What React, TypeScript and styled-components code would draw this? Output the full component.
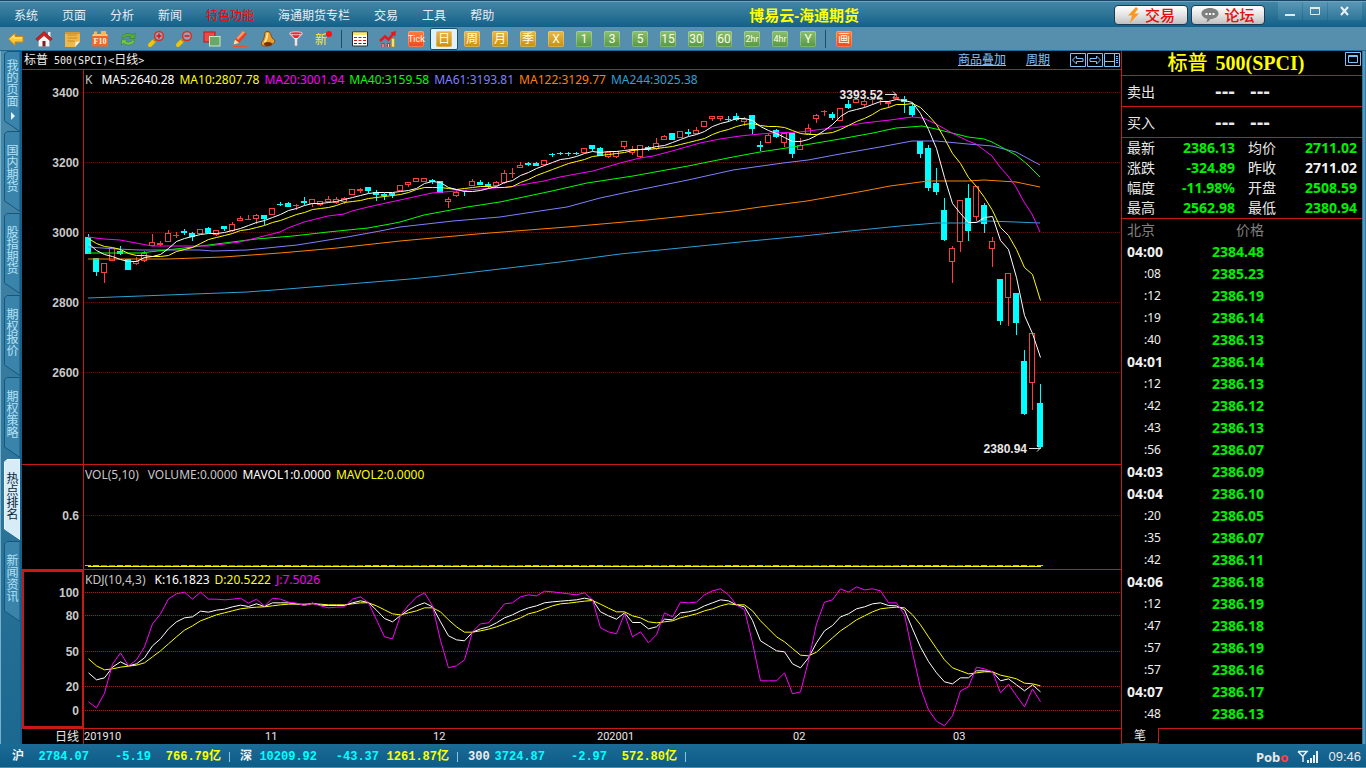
import React from "react";
import styled, { createGlobalStyle, css } from "styled-components";

const GlobalStyle = createGlobalStyle`
  *, *::before, *::after { box-sizing: border-box; }
  html, body { margin: 0; padding: 0; background: #000; }
  body { font-family: "Noto Sans", "Noto Sans CJK SC", sans-serif; font-size: 12px; color: #e8e8e8; }
  button { font: inherit; color: inherit; background: none; border: 0; padding: 0; cursor: pointer; }
  a { color: inherit; }
`;

const RED = "#c81818";
const CYAN = "#00ffff";
const CANDLE_RED = "#ff3c3c";
const GREEN = "#00f000";

/* ---------- data ---------- */

type Candle = [kind: "u" | "d", high: number, top: number, bottom: number, low: number];

const candles: Candle[] = [
  ["d", 234, 237, 254, 254], ["d", 258, 258, 272, 276], ["u", 263, 263, 273, 283], ["u", 248, 248, 261, 261],
  ["d", 246, 251, 254, 255], ["d", 259, 259, 270, 270], ["u", 257, 261, 264, 265], ["u", 251, 253, 261, 262],
  ["u", 234, 242, 246, 246], ["u", 241, 243, 245, 246], ["u", 230, 233, 242, 242], ["u", 232, 235, 236, 238],
  ["d", 229, 231, 233, 235], ["d", 232, 233, 237, 241], ["u", 229, 229, 234, 234], ["d", 227, 228, 233, 233],
  ["u", 230, 230, 235, 236], ["d", 226, 226, 229, 231], ["u", 222, 224, 231, 232], ["u", 216, 218, 221, 221],
  ["u", 215, 219, 220, 220], ["u", 214, 215, 219, 224], ["d", 215, 215, 219, 225], ["u", 208, 208, 215, 215],
  ["d", 202, 204, 205, 206], ["d", 202, 203, 207, 207], ["u", 204, 205, 206, 210], ["d", 197, 201, 203, 205],
  ["u", 199, 199, 204, 207], ["u", 201, 201, 205, 206], ["u", 196, 199, 202, 203], ["u", 197, 199, 203, 204],
  ["u", 197, 198, 202, 204], ["u", 189, 189, 195, 195], ["u", 188, 189, 191, 193], ["d", 187, 187, 191, 193],
  ["d", 190, 192, 195, 201], ["d", 193, 194, 196, 200], ["d", 193, 193, 195, 198], ["u", 185, 185, 191, 191],
  ["u", 182, 182, 185, 187], ["u", 178, 178, 182, 182], ["u", 178, 178, 182, 182], ["d", 179, 180, 182, 184],
  ["d", 181, 181, 193, 193], ["u", 197, 199, 202, 208], ["u", 190, 192, 196, 197], ["d", 190, 190, 191, 196],
  ["u", 179, 181, 186, 186], ["d", 180, 182, 185, 185], ["d", 182, 184, 187, 189], ["u", 181, 182, 186, 186],
  ["u", 170, 173, 183, 184], ["u", 168, 173, 174, 178], ["u", 162, 165, 168, 168], ["d", 162, 163, 165, 166],
  ["d", 162, 163, 166, 166], ["u", 160, 160, 165, 166], ["d", 153, 154, 155, 157], ["d", 152, 153, 154, 155],
  ["d", 152, 153, 154, 156], ["d", 152, 153, 154, 155], ["u", 148, 148, 153, 153], ["d", 145, 145, 149, 151],
  ["d", 147, 148, 156, 156], ["u", 152, 152, 157, 158], ["u", 151, 151, 157, 158], ["u", 141, 141, 147, 149],
  ["u", 146, 150, 153, 155], ["u", 145, 145, 157, 158], ["d", 146, 147, 149, 151], ["u", 138, 143, 149, 150],
  ["u", 135, 136, 140, 140], ["d", 133, 133, 140, 140], ["u", 131, 131, 138, 138], ["d", 129, 132, 134, 136],
  ["u", 127, 130, 134, 134], ["u", 121, 121, 127, 127], ["u", 116, 116, 119, 121], ["u", 116, 116, 119, 121],
  ["d", 116, 119, 120, 122], ["d", 113, 116, 120, 121], ["u", 117, 119, 122, 126], ["d", 115, 115, 129, 134],
  ["d", 141, 145, 147, 151], ["u", 133, 135, 143, 143], ["d", 129, 130, 137, 138], ["u", 133, 133, 143, 147],
  ["d", 133, 133, 154, 158], ["u", 138, 145, 150, 150], ["u", 124, 128, 134, 134], ["u", 114, 115, 119, 123],
  ["u", 110, 111, 112, 116], ["d", 112, 114, 118, 120], ["u", 108, 108, 121, 121], ["d", 100, 104, 108, 109],
  ["u", 99, 99, 103, 103], ["u", 99, 101, 105, 107], ["u", 99, 99, 100, 105], ["u", 99, 99, 100, 105],
  ["u", 101, 102, 104, 108], ["u", 94, 97, 99, 99], ["d", 96, 99, 102, 113], ["d", 103, 106, 115, 117],
  ["d", 141, 141, 154, 158], ["d", 145, 148, 188, 191], ["d", 168, 183, 192, 195], ["d", 198, 210, 240, 241],
  ["u", 246, 248, 262, 283], ["u", 200, 200, 242, 252], ["d", 184, 198, 231, 241], ["u", 186, 186, 217, 221],
  ["d", 203, 205, 224, 233], ["u", 237, 241, 249, 267], ["d", 279, 279, 321, 325], ["u", 273, 273, 298, 326],
  ["d", 293, 293, 323, 335], ["d", 350, 361, 414, 415], ["u", 333, 333, 383, 410], ["d", 384, 403, 447, 449],
];

const ma5 = [
  243, 250, 254, 256, 259, 261, 261, 257, 256, 254, 248, 241, 238, 236, 234, 233, 233, 232, 230, 228, 225, 222, 220,
  217, 214, 210, 208, 205, 203, 203, 202, 201, 199, 197, 195, 193, 192, 192, 192, 191, 190, 188, 183, 181, 182, 187,
  189, 191, 191, 190, 188, 186, 182, 180, 175, 172, 168, 165, 162, 159, 158, 156, 153, 151, 152, 151, 151, 150, 149,
  149, 148, 146, 145, 142, 139, 136, 134, 131, 126, 123, 121, 118, 118, 120, 126, 130, 133, 137, 141, 141, 139, 135,
  130, 124, 116, 111, 109, 107, 104, 101, 101, 99, 100, 102, 113, 129, 148, 177, 203, 213, 222, 222, 217, 216, 240,
  249, 277, 315, 333, 357,
];

const ma10 = [
  238, 243, 246, 247, 249, 253, 255, 255, 256, 256, 255, 251, 249, 247, 243, 239, 237, 235, 233, 230, 229, 227, 225,
  222, 220, 217, 214, 212, 209, 208, 207, 205, 202, 201, 200, 198, 197, 196, 195, 194, 192, 189, 187, 187, 187, 188,
  189, 188, 187, 186, 186, 187, 187, 186, 182, 179, 175, 172, 169, 166, 163, 161, 159, 156, 155, 154, 153, 152, 150,
  149, 149, 148, 147, 146, 144, 142, 140, 138, 134, 131, 129, 126, 124, 123, 125, 126, 126, 127, 130, 133, 134, 134,
  133, 132, 129, 125, 121, 118, 114, 109, 107, 104, 104, 103, 107, 115, 124, 138, 153, 163, 177, 186, 197, 210, 227,
  235, 249, 267, 274, 300,
];

const longAverages = [
  {
    color: "#ff00ff",
    points:
      "88,237 104,239 120,240 136,243 152,246 208,246 224,244 240,242 256,238 280,232 288,228 304,222 328,216 344,214 352,211 368,207 400,200 432,193 480,189 510,187 532,183 544,181 560,177 576,174 593,171 620,163 640,158 653,156 672,151 700,143 720,139 740,136 760,134 773,133 800,132 840,127 864,123 890,120 912,117 923,118 936,124 952,133 968,141 976,144 992,156 1000,167 1008,176 1016,187 1024,202 1032,214 1040,232",
  },
  {
    color: "#00ff00",
    points:
      "88,253 140,253 193,247 256,239 293,236 328,232 368,228 390,224 400,222 424,215 467,207 500,202 552,191 587,183 633,176 688,166 733,157 760,152 793,147 840,139 873,133 896,128 910,127 922,126 936,129 952,133 968,137 984,139 992,142 1016,155 1027,164 1040,177",
  },
  {
    color: "#8080ff",
    points:
      "88,247 117,249 140,250 200,250 213,251 247,250 297,245 347,237 380,231 400,227 453,221 500,217 533,212 567,207 600,198 633,191 688,180 733,170 783,163 808,160 840,154 880,147 912,141 936,141 968,144 992,146 1016,152 1040,165",
  },
  {
    color: "#ff8000",
    points:
      "88,259 168,259 223,257 280,253 337,248 400,241 477,234 567,227 647,220 733,211 760,207 807,201 864,191 890,186 928,181 968,181 984,180 1016,182 1040,187",
  },
  {
    color: "#30a0d8",
    points:
      "88,298 167,295 247,292 287,289 410,279 440,276 500,269 560,262 620,254 680,248 740,242 803,236 850,231 900,226 937,223 968,223 987,221 1016,222 1040,223",
  },
];

/* Oscillator samples, kept in thirds of a pixel below the pane's top edge. */
const kLine = [
  307, 328, 322, 290, 274, 286, 280, 262, 226, 205, 175, 154, 142, 139, 122, 125, 119, 116, 109, 104, 108, 100, 108,
  97, 97, 97, 100, 104, 98, 104, 105, 105, 105, 97, 91, 96, 119, 144, 154, 135, 118, 106, 97, 109, 154, 196, 208, 211,
  185, 175, 169, 157, 142, 133, 121, 112, 106, 97, 94, 92, 90, 88, 83, 88, 124, 136, 146, 127, 156, 156, 175, 169, 146,
  148, 127, 124, 118, 106, 97, 88, 91, 103, 109, 150, 211, 226, 241, 244, 280, 292, 262, 217, 181, 165, 139, 130, 115,
  109, 100, 97, 105, 106, 118, 175, 230, 273, 307, 334, 340, 322, 322, 301, 301, 304, 331, 325, 343, 361, 343, 364,
];

const dLine = [
  265, 286, 298, 295, 290, 287, 284, 277, 259, 241, 220, 199, 179, 166, 151, 142, 133, 127, 121, 115, 112, 110, 109,
  106, 103, 101, 101, 101, 100, 101, 103, 103, 103, 100, 97, 97, 106, 118, 130, 133, 127, 121, 112, 112, 124, 148, 169,
  185, 185, 181, 176, 169, 160, 151, 142, 130, 124, 115, 106, 100, 98, 95, 92, 90, 101, 113, 124, 124, 136, 142, 154,
  157, 154, 151, 142, 136, 130, 121, 115, 106, 100, 103, 103, 121, 151, 175, 199, 214, 234, 254, 256, 245, 223, 202,
  181, 165, 148, 136, 124, 115, 112, 110, 112, 133, 163, 199, 234, 268, 292, 301, 310, 307, 304, 304, 314, 319, 325,
  338, 340, 346,
];

const jLine = [
  394, 412, 368, 281, 247, 286, 268, 229, 160, 130, 85, 70, 65, 86, 65, 86, 86, 88, 86, 83, 98, 86, 107, 83, 86, 95,
  98, 105, 98, 106, 112, 110, 109, 86, 79, 97, 148, 199, 205, 135, 104, 80, 67, 106, 210, 292, 286, 268, 184, 160, 157,
  130, 100, 97, 79, 73, 76, 62, 64, 67, 70, 73, 67, 88, 172, 184, 190, 130, 199, 184, 217, 193, 127, 139, 95, 97, 95,
  73, 61, 55, 73, 103, 118, 217, 331, 331, 331, 307, 370, 364, 271, 160, 95, 88, 55, 65, 49, 58, 55, 61, 97, 97, 133,
  247, 352, 418, 452, 466, 436, 361, 349, 290, 295, 304, 367, 341, 376, 409, 355, 394,
];

const FIRST_X = 66;
const STEP = 8;
const sampleX = (i: number) => FIRST_X + STEP * i;

const quotes = [
  ["最新", "2386.13", "均价", "2711.02", GREEN],
  ["涨跌", "-324.89", "昨收", "2711.02", "#f0f0f0"],
  ["幅度", "-11.98%", "开盘", "2508.59", GREEN],
  ["最高", "2562.98", "最低", "2380.94", GREEN],
];

const ticks: [string, string][] = [
  ["04:00", "2384.48"], [":08", "2385.23"], [":12", "2386.19"], [":19", "2386.14"], [":40", "2386.13"],
  ["04:01", "2386.14"], [":12", "2386.13"], [":42", "2386.12"], [":43", "2386.13"], [":56", "2386.07"],
  ["04:03", "2386.09"], ["04:04", "2386.10"], [":20", "2386.05"], [":35", "2386.07"], [":42", "2386.11"],
  ["04:06", "2386.18"], [":12", "2386.19"], [":47", "2386.18"], [":57", "2386.19"], [":57", "2386.16"],
  ["04:07", "2386.17"], [":48", "2386.13"],
];

const indices = [
  ["沪", "2784.07", "-5.19", "766.79亿"],
  ["深", "10209.92", "-43.37", "1261.87亿"],
  ["300", "3724.87", "-2.97", "572.80亿"],
];

const menus = ["系统", "页面", "分析", "新闻", "特色功能", "海通期货专栏", "交易", "工具", "帮助"];
const railTabs = ["我的页面", "国内期货", "股指期货", "期权报价", "期权策略", "热点排名", "新闻资讯"];

/* ---------- frame ---------- */

const Frame = styled.div`
  min-height: 100vh;
  display: flex;
  flex-direction: column;
  border-top: 1px solid #1b4462;
  background: #2a7099;
`;

const MenuBar = styled.header`
  display: flex;
  align-items: center;
  height: 26px;
  padding-left: 2px;
  border-top: 1px solid #6aa5c4;
  background: linear-gradient(#4286a6, #2f7698 45%, #12608a);
`;

const MenuButton = styled.button<{ $hot?: boolean }>`
  height: 24px;
  padding: 0 12px;
  line-height: 26px;
  color: ${(p) => (p.$hot ? "#ff0000" : "#e4eef4")};
`;

const AppTitle = styled.h1`
  flex: 1;
  margin: 0;
  padding-right: 12px;
  text-align: center;
  font-size: 15px;
  line-height: 24px;
  font-weight: 700;
  color: #ffff00;
`;

const PillButton = styled.button`
  display: flex;
  align-items: center;
  justify-content: center;
  gap: 5px;
  width: 74px;
  height: 20px;
  margin-right: 3px;
  border: 1px solid #1c3a50;
  border-radius: 4px;
  background: linear-gradient(#ffffff, #e4e4e4 50%, #c0c0c0);
  color: #e01010;
  font-size: 15px;
  line-height: 18px;
  font-weight: 500;
`;

const WindowControls = styled.div`
  display: flex;
  align-self: flex-start;
  gap: 1px;
  margin: 0 4px 0 10px;
`;

const WindowButton = styled.button<{ $wide?: boolean }>`
  width: ${(p) => (p.$wide ? 34 : 24)}px;
  height: 18px;
  display: flex;
  align-items: center;
  justify-content: center;
  background: linear-gradient(#5a97b5, #2f7699);
`;

const ToolBar = styled.nav`
  display: flex;
  align-items: center;
  height: 24px;
  padding-left: 2px;
  border-bottom: 1px solid #1c6a94;
  background: #568fad;
`;

const ToolButton = styled.button<{ $active?: boolean }>`
  width: 28px;
  height: 22px;
  display: flex;
  align-items: center;
  justify-content: center;
  ${(p) =>
    p.$active &&
    css`
      background: #dff2fc;
      border: 1px solid #14506e;
      border-radius: 2px;
    `}
`;

const ToolDivider = styled.span`
  width: 8px;
  height: 18px;
  background: linear-gradient(#1d4d66, #1d4d66) 3px 0 / 1px 100% no-repeat;
`;

const tones = {
  gold: "linear-gradient(#e8b848, #c89010)",
  green: "linear-gradient(#8cc070, #559840)",
  red: "linear-gradient(#ff8040, #f04818)",
};

const Badge = styled.span<{ $tone: keyof typeof tones; $small?: boolean }>`
  width: 16px;
  height: 16px;
  border-radius: 2px;
  background: ${(p) => tones[p.$tone]};
  box-shadow: inset 0 0 0 1px rgba(255, 255, 255, 0.25);
  color: #fffbe8;
  font-family: Roboto, "Noto Sans CJK SC", sans-serif;
  font-size: ${(p) => (p.$small ? 9 : 12)}px;
  line-height: 16px;
  text-align: center;
`;

const Workspace = styled.main`
  flex: 1;
  display: grid;
  grid-template-columns: 22px minmax(0, 1fr) 241px;
  padding-right: 4px;
  background: linear-gradient(90deg, #1c6a94, #6ba6c4 50%, #1c6a94) right / 4px 100% no-repeat;
`;

/* ---------- left rail ---------- */

const Rail = styled.nav`
  display: flex;
  flex-direction: column;
  gap: 1px;
  padding-left: 3px;
  border-left: 1px solid #78b0cc;
  border-right: 2px solid #14608a;
  background: linear-gradient(#4d8bab, #1c6890);
`;

const RailTab = styled.button<{ $active?: boolean }>`
  position: relative;
  width: 16px;
  height: 81px;
  display: flex;
  flex-direction: column;
  align-items: center;
  padding: 14px 0 0 1px;
  color: ${(p) => (p.$active ? "#06283c" : "#b4e2f6")};

  &:first-child { padding-top: 9px; height: 79px; }
`;

const RailShape = styled.svg`
  position: absolute;
  inset: 0;
`;

const RailLabel = styled.span`
  position: relative;
  width: 12px;
  line-height: 12px;
  word-break: break-all;
`;

const RailArrow = styled.svg`
  position: relative;
  margin-top: 4px;
`;

/* ---------- chart ---------- */

const ChartPanel = styled.section`
  display: flex;
  flex-direction: column;
  background: #000;
`;

const ChartHeader = styled.div`
  display: flex;
  align-items: center;
  height: 19px;
  padding: 0 1px 0 2px;
  border-bottom: 1px solid ${RED};
`;

const ChartTitle = styled.h2`
  flex: 1;
  margin: 0;
  font-family: "DejaVu Sans Mono", "Noto Sans CJK SC", monospace;
  font-size: 10px;
  line-height: 18px;
  font-weight: 400;
  color: #f0f0f0;
`;

const TitleHan = styled.span`
  font-size: 12px;
`;

const HeaderLink = styled.a`
  margin-right: 20px;
  line-height: 16px;
  color: #80c0ff;
`;

const HeaderIcons = styled.div`
  display: flex;
  gap: 1px;
  color: #80c0ff;
`;

const IconButton = styled.button`
  display: flex;
  color: #80c0ff;
`;

const Pane = styled.div<{ $height: number }>`
  position: relative;
  flex: ${(p) => p.$height} 0 ${(p) => p.$height}px;
  border-bottom: 1px solid ${RED};
`;

const Plot = styled.svg`
  position: absolute;
  inset: 0;
  width: 100%;
  height: 100%;
  font-family: "Liberation Sans", sans-serif;
  font-size: 12px;
`;

const Legend = styled.div`
  position: absolute;
  left: 63px;
  top: 1px;
  display: flex;
  gap: 5px;
  line-height: 17px;
  white-space: nowrap;
`;

const LegendItem = styled.span<{ $color: string }>`
  color: ${(p) => p.$color};

  &:first-child { margin-right: 4px; }
`;

const DateAxis = styled.svg`
  display: block;
  width: 100%;
  height: 15px;
  font-family: Roboto, "Noto Sans CJK SC", sans-serif;
  font-size: 11px;
`;

/* ---------- quote panel ---------- */

const QuotePanel = styled.aside`
  display: flex;
  flex-direction: column;
  border-left: 1px solid ${RED};
  background: #000;
  font-size: 14px;
`;

const QuoteHeader = styled.div`
  position: relative;
  height: 25px;
  border-bottom: 1px solid ${RED};
`;

const QuoteTitle = styled.h2`
  margin: 0;
  padding-right: 12px;
  text-align: center;
  font-family: "Liberation Serif", "Noto Sans CJK SC", serif;
  font-size: 20px;
  line-height: 24px;
  font-weight: 500;
  color: #ffff00;
`;

const QuoteLatin = styled.span`
  margin-left: 3px;
  font-weight: 700;
`;

const QuoteCorner = styled.div`
  position: absolute;
  top: 1px;
  right: 1px;
`;

const BookRow = styled.div`
  display: flex;
  align-items: center;
  height: 31px;
  padding-left: 5px;
  border-bottom: 1px solid ${RED};
`;

const BookLabel = styled.span`
  width: 88px;
`;

const BookValue = styled.span`
  width: 35px;
  font-family: "Liberation Sans", sans-serif;
  font-size: 20px;
  line-height: 24px;
  font-weight: 700;
`;

const QuoteTable = styled.table`
  width: 100%;
  table-layout: fixed;
  border-collapse: collapse;
  border-bottom: 1px solid ${RED};
`;

const QuoteLabel = styled.th<{ $second?: boolean }>`
  width: ${(p) => (p.$second ? 50 : 43)}px;
  height: 20px;
  padding: 0 0 0 ${(p) => (p.$second ? 13 : 5)}px;
  font-weight: 400;
  line-height: 20px;
  text-align: left;
`;

const QuoteValue = styled.td<{ $color: string; $last?: boolean }>`
  width: ${(p) => (p.$last ? "auto" : "70px")};
  padding: 0 ${(p) => (p.$last ? 5 : 0)}px 0 0;
  font-weight: 700;
  line-height: 20px;
  text-align: right;
  color: ${(p) => p.$color};
`;

const TickTable = styled.table`
  width: 142px;
  table-layout: fixed;
  border-collapse: collapse;
`;

const TickHead = styled.th<{ $right?: boolean }>`
  height: 22px;
  padding: 0 0 0 ${(p) => (p.$right ? 0 : 5)}px;
  font-weight: 400;
  line-height: 22px;
  text-align: ${(p) => (p.$right ? "right" : "left")};
  color: #808080;
`;

const TickTime = styled.td<{ $minute: boolean }>`
  height: 22px;
  padding: 0 0 0 ${(p) => (p.$minute ? 5 : 22)}px;
  font-size: ${(p) => (p.$minute ? 14 : 12)}px;
  font-weight: ${(p) => (p.$minute ? 700 : 400)};
  line-height: 22px;
  color: #f0f0f0;
`;

const TickPrice = styled.td`
  padding: 0;
  font-weight: 700;
  line-height: 22px;
  text-align: right;
  color: ${GREEN};
`;

const PanelTabs = styled.div`
  display: flex;
  height: 16px;
  margin-top: auto;

  &::after { content: ""; flex: 1; border-top: 1px solid ${RED}; }
`;

const PanelTab = styled.button`
  width: 37px;
  border-right: 1px solid ${RED};
  border-bottom: 1px solid ${RED};
  border-radius: 0 0 2px 2px;
  font-size: 12px;
  line-height: 15px;
`;

/* ---------- status bar ---------- */

const StatusBar = styled.footer`
  display: flex;
  align-items: center;
  height: 24px;
  padding: 2px 5px 0 12px;
  border-bottom: 1px solid #4f8fb0;
  background: linear-gradient(#1a6b95, #0e5c88);
  font-family: "Liberation Mono", "Noto Sans CJK SC", monospace;
  font-weight: 700;
  line-height: 22px;
`;

const IndexGroup = styled.div`
  display: grid;
  grid-template-columns: 19px 58px 62px 70px 9px;
  margin-right: 10px;
  white-space: nowrap;

  &::after { content: ""; height: 10px; align-self: center; border-right: 1px solid #8cc4e0; }
`;

const IndexCell = styled.span<{ $color?: string }>`
  color: ${(p) => p.$color ?? "#f0f0f0"};
  text-align: ${(p) => (p.$color ? "right" : "left")};
`;

const Brand = styled.span`
  margin-left: auto;
  font-family: "Noto Sans", sans-serif;
  font-size: 13px;
`;

const BrandDot = styled.span`
  color: #ff4040;
`;

const Signal = styled.svg`
  margin: 0 9px;
`;

const Clock = styled.time`
  font-family: "Liberation Sans", sans-serif;
  font-size: 13px;
  font-weight: 400;
`;

/* ---------- icons ---------- */

const Icon = ({ children }: { children: React.ReactNode }) => (
  <svg width="18" height="18" viewBox="0 0 18 18" aria-hidden="true">
    {children}
  </svg>
);

const Magnifier = ({ plus }: { plus?: boolean }) => (
  <Icon>
    <path d="M3 15 6.5 11.500" stroke="#f4c400" strokeWidth="4" strokeLinecap="round" />
    <path d="M7 11 9.500 8.500" stroke="#c07020" strokeWidth="2" />
    <circle cx="12" cy="6" r="4.400" fill="#98a0b8" stroke="#d83020" strokeWidth="1.500" />
    <path d={plus ? "M9.500 6h5M12 3.500v5" : "M9.500 6h5"} stroke="#e01010" strokeWidth="1.500" />
  </Icon>
);

const leftTools: [string, React.ReactNode][] = [
  ["后退", <Icon><path d="M1.5 9 8 3v3.500h8v5.500H8v3.500z" fill="#ffc830" stroke="#c88810" /><path d="M3 9 7 5.500V8h8" fill="none" stroke="#ffe890" /></Icon>],
  ["首页", <Icon><path d="M3.500 9v7.500h11V9L9 4z" fill="#f4f4f4" stroke="#a0a8b0" strokeWidth=".6" /><path d="M13 2h2.500v5H13z" fill="#e8e8e8" /><path d="M.8 9 9 1.500 17.200 9l-2 1.800L9 5.500l-6.200 5.300z" fill="#d02020" stroke="#8c1010" strokeWidth=".6" /><path d="M7.500 11h3v5.500h-3z" fill="#802020" /></Icon>],
  ["公告", <Icon><path d="M2 2h15v9.500L12 17H2z" fill="#f0b848" /><path d="M17 11.500 12 17l.5-5z" fill="#fff0c8" /><path d="M4.500 5h9.500M4.500 8h9.500M4.500 11h7" stroke="#c88820" /><path d="M2 2h15v2H2z" fill="#d09838" /></Icon>],
  ["F10", <Icon><path d="M2 4h14l1 2v10.500H1V6z" fill="#f06828" /><path d="M2 4h14l1 2H1z" fill="#f8c878" /><path d="M3 1.500h3v3H3zM10 1h5v3.500h-5z" fill="#f0b860" /><text x="9" y="14" textAnchor="middle" fontSize="8" fontWeight="700" fontFamily="Liberation Serif, serif" fill="#fff8e0">F10</text></Icon>],
  ["刷新", <Icon><path d="M3 6.500C5 3 11 2.500 13.500 5L16 3v5.500h-6l1.800-1.800C9.500 5.500 6.500 6 5 8H3z" fill="#58b030" stroke="#2e7818" strokeWidth=".5" /><path d="M15.500 11.500C13.500 15.500 7.500 16 4.800 13.200L2.500 15V9.800H8.500L6.700 11.600C9 13 12 12.300 13.300 10.300h2.200z" fill="#78c848" stroke="#2e7818" strokeWidth=".5" /></Icon>],
  ["放大", <Magnifier plus />],
  ["缩小", <Magnifier />],
  ["叠加", <Icon><rect x="1" y="2" width="11" height="10" fill="#f04848" stroke="#b81818" /><rect x="6.500" y="6.500" width="10.500" height="9.500" fill="#68a868" stroke="#c8e8c8" /></Icon>],
  ["画线", <Icon><path d="M2 16.500h14" stroke="#e85030" /><path d="m2.500 14.500 1.500-5L12 1l4 3-8 9z" fill="#e84020" /><path d="m5.500 8 6.500-7 2 1.500L7 10z" fill="#ff9868" /><path d="m2.500 14.500 1.500-5 4 3.500z" fill="#ffe0b0" /></Icon>],
  ["预警", <Icon><path d="M7 1.500C4.500 3.500 6.500 8 2.500 12.500v2.500c5 2.500 9 1 13.500-3l-.5-2C12 9 12.500 3.500 10 1.500z" fill="#e8a030" stroke="#7c3c08" strokeWidth=".8" /><path d="M8.500 3C8 7 8.500 9 5.500 12.500" stroke="#ffe8a0" strokeWidth="1.800" fill="none" /><ellipse cx="9" cy="14" rx="4" ry="2" fill="#7c3008" /></Icon>],
  ["筛选", <Icon><path d="M2 3.500 7.500 9.500v6.500h3V9.500L16 3.500z" fill="#e8e8f0" stroke="#888898" strokeWidth=".7" /><path d="M3.500 3.500h11L10.500 8h-3z" fill="#e82030" /><ellipse cx="9" cy="3.300" rx="6.500" ry="1.500" fill="#f02838" stroke="#e8e8f0" strokeWidth=".8" /></Icon>],
  ["新", <Icon><text x="0" y="14" fontSize="12" fontFamily="Noto Sans CJK SC, sans-serif" fill="#ffe838">新</text><circle cx="14" cy="4" r="3" fill="#ff1010" /></Icon>],
];

const midTools: [string, React.ReactNode][] = [
  ["报价", <Icon><path d="M1.500 2h15v14h-15z" fill="#fff" stroke="#303020" /><path d="M2 2.500h14v2.500H2z" fill="#ffe860" /><path d="M3 7.500h3m1.500 0h3m1.500 0h3" stroke="#108010" /><path d="M3 10.500h3m1.500 0h3m1.500 0h3" stroke="#d02020" /><path d="M3 13.500h3m1.500 0h3m1.500 0h3" stroke="#2020a0" /></Icon>],
  ["分时", <Icon><path d="M2.500 17v-4h3v4zM8 17v-4h3v4z" fill="#c83030" /><path d="M3.500 17v-3h1v3zM9 17v-3h1v3z" fill="#f0d0d0" /><path d="M12.500 17V8.500h3V17z" fill="#ffe060" stroke="#c08000" strokeWidth=".6" /><path d="M1 11 6 6.500l3.500 3L15 3" fill="none" stroke="#e81818" strokeWidth="2.500" /><path d="M11.500 2.500 17 1l-.8 5.500z" fill="#e81818" /></Icon>],
  ["Tick", <Badge $tone="red" $small>Tick</Badge>],
];

const periods: [string, "gold" | "green"][] = [
  ["日", "gold"], ["周", "gold"], ["月", "gold"], ["季", "gold"], ["X", "gold"], ["1", "green"], ["3", "green"],
  ["5", "green"], ["15", "green"], ["30", "green"], ["60", "green"], ["2hr", "green"], ["4hr", "green"], ["Y", "green"],
];

/* ---------- chart pieces ---------- */

const Levels = ({ levels, color }: { levels: [number, string][]; color: string }) => (
  <>
    {levels.map(([y, label]) => (
      <g key={label}>
        <line x1="63" x2="100%" y1={y + 0.5} y2={y + 0.5} stroke={color} strokeDasharray="1 1" shapeRendering="crispEdges" />
        <text x="57" y={y + 5} textAnchor="end" fontWeight="700" fill="#c8c8c8">
          {label}
        </text>
      </g>
    ))}
    <line x1="61.5" x2="61.5" y1="0" y2="100%" stroke={RED} shapeRendering="crispEdges" />
  </>
);

const Series = ({ values, color, scale = 1 }: { values: number[]; color: string; scale?: number }) => (
  <polyline fill="none" stroke={color} points={values.map((v, i) => `${sampleX(i) + 0.5},${v / scale + 0.5}`).join(" ")} />
);

const CandleShape = ({ candle, x }: { candle: Candle; x: number }) => {
  const [kind, high, top, bottom, low] = candle;
  const color = kind === "u" ? CANDLE_RED : CYAN;
  const hollow = kind === "u" && bottom - top > 2;
  return (
    <g shapeRendering="crispEdges">
      {high < top && <rect x={x} y={high} width="1" height={top - high} fill={color} />}
      {low > bottom && <rect x={x} y={bottom} width="1" height={low - bottom} fill={color} />}
      {hollow ? (
        <rect x={x - 2.5} y={top + 0.5} width="5" height={bottom - top - 1} fill="#000" stroke={color} />
      ) : (
        <rect x={x - 3} y={top} width="6" height={bottom - top} fill={color} />
      )}
    </g>
  );
};

const PricePane = () => (
  <Pane $height={395}>
    <Plot role="img" aria-label="K线图">
      <Levels
        color="#800000"
        levels={[[22, "3400"], [92, "3200"], [162, "3000"], [232, "2800"], [302, "2600"]]}
      />
      <g transform="translate(0 -70)">
        {candles.map((c, i) => (
          <CandleShape key={i} candle={c} x={sampleX(i)} />
        ))}
        <g transform="translate(-22 0)">
          {[...longAverages].reverse().map((a) => (
            <polyline key={a.color} fill="none" stroke={a.color} points={a.points} />
          ))}
        </g>
        <Series values={ma10} color="#ffff00" />
        <Series values={ma5} color="#ffffff" />
        <g fill="#e8e8e8" fontWeight="700">
          <text x="861" y="99" textAnchor="end">3393.52</text>
          <text x="1005" y="453" textAnchor="end">2380.94</text>
        </g>
        <path d="M863 94.500h11m-3-3 3 3-3 3M1007 448.500h11m-3-3 3 3-3 3" fill="none" stroke="#e0e0e0" />
      </g>
    </Plot>
    <Legend>
      <LegendItem $color="#c8c8c8">K</LegendItem>
      <LegendItem $color="#ffffff">MA5:2640.28</LegendItem>
      <LegendItem $color="#ffff00">MA10:2807.78</LegendItem>
      <LegendItem $color="#ff00ff">MA20:3001.94</LegendItem>
      <LegendItem $color="#00ff00">MA40:3159.58</LegendItem>
      <LegendItem $color="#8080ff">MA61:3193.81</LegendItem>
      <LegendItem $color="#ff8000">MA122:3129.77</LegendItem>
      <LegendItem $color="#30a0d8">MA244:3025.38</LegendItem>
    </Legend>
  </Pane>
);

const VolumePane = () => (
  <Pane $height={105}>
    <Plot role="img" aria-label="成交量">
      <Levels color="#800000" levels={[[50, "0.6"]]} />
      {candles.map((c, i) => (
        <rect key={i} x={sampleX(i) - 3} y="100" width="6" height="1" fill={c[0] === "u" ? CANDLE_RED : CYAN} shapeRendering="crispEdges" />
      ))}
      <rect x="66" y="101" width="953" height="1" fill="#ffff00" />
    </Plot>
    <Legend>
      <LegendItem $color="#c8c8c8">VOL(5,10)</LegendItem>
      <LegendItem $color="#c8c8c8">VOLUME:0.0000</LegendItem>
      <LegendItem $color="#ffffff">MAVOL1:0.0000</LegendItem>
      <LegendItem $color="#ffff00">MAVOL2:0.0000</LegendItem>
    </Legend>
  </Pane>
);

const OscillatorPane = () => (
  <Pane $height={159}>
    <Plot role="img" aria-label="KDJ">
      <Levels color="#b81818" levels={[[22, "100"], [45, "80"], [81, "50"], [116, "20"], [140, "0"]]} />
      <rect x="1" y="1" width="60" height="156" fill="none" stroke={RED} strokeWidth="2" shapeRendering="crispEdges" />
      <Series values={dLine} scale={3} color="#ffff00" />
      <Series values={kLine} scale={3} color="#ffffff" />
      <Series values={jLine} scale={3} color="#ff00ff" />
    </Plot>
    <Legend>
      <LegendItem $color="#c8c8c8">KDJ(10,4,3)</LegendItem>
      <LegendItem $color="#ffffff">K:16.1823</LegendItem>
      <LegendItem $color="#ffff00">D:20.5222</LegendItem>
      <LegendItem $color="#ff00ff">J:7.5026</LegendItem>
    </Legend>
  </Pane>
);

const dates: [number, string][] = [[62, "201910"], [243, "11"], [411, "12"], [575, "202001"], [771, "02"], [931, "03"]];

export default function App() {
  return (
    <>
      <GlobalStyle />
      <Frame>
        <MenuBar>
          {menus.map((m) => (
            <MenuButton key={m} $hot={m === "特色功能"}>{m}</MenuButton>
          ))}
          <AppTitle>博易云-海通期货</AppTitle>
          <PillButton>
            <svg width="13" height="16" viewBox="0 0 13 16" aria-hidden="true">
              <path d="M9 0 1 8.500h4L3 16l9-9.500H7.500L11 2z" fill="#f89820" />
            </svg>
            交易
          </PillButton>
          <PillButton>
            <svg width="18" height="14" viewBox="0 0 18 14" aria-hidden="true">
              <path d="M9 0c5 0 8.500 2.400 8.500 5.500S14 11 9.500 11C9 12.500 7 14 5 14c1-1 1.300-2 1.200-3.300C3 10 .5 8 .5 5.500.5 2.400 4 0 9 0z" fill="#808080" />
              <path d="M4.500 5h2v2h-2zM8 5h2v2H8zM11.500 5h2v2h-2z" fill="#fff" />
            </svg>
            论坛
          </PillButton>
          <WindowControls>
            <WindowButton aria-label="最小化">
              <svg width="12" height="12"><path d="M1 9h10v2H1z" fill="#dceaf2" /></svg>
            </WindowButton>
            <WindowButton aria-label="最大化">
              <svg width="12" height="12"><path d="M1.500 3h9v6.500h-9z" fill="none" stroke="#dceaf2" /><path d="M1 2h10v2H1z" fill="#dceaf2" /></svg>
            </WindowButton>
            <WindowButton $wide aria-label="关闭">
              <svg width="12" height="12"><path d="m2 2 7 8M9 2l-7 8" stroke="#e8f2f8" strokeWidth="2" /></svg>
            </WindowButton>
          </WindowControls>
        </MenuBar>

        <ToolBar>
          {leftTools.map(([name, icon]) => (
            <ToolButton key={name} aria-label={name}>{icon}</ToolButton>
          ))}
          <ToolDivider />
          {midTools.map(([name, icon]) => (
            <ToolButton key={name} aria-label={name}>{icon}</ToolButton>
          ))}
          {periods.map(([label, tone]) => (
            <ToolButton key={label} $active={label === "日"}>
              <Badge $tone={tone} $small={label.endsWith("hr")}>{label}</Badge>
            </ToolButton>
          ))}
          <ToolDivider />
          <ToolButton>
            <Badge $tone="red">画</Badge>
          </ToolButton>
        </ToolBar>

        <Workspace>
          <Rail>
            {railTabs.map((label, i) => {
              const active = label === "热点排名";
              return (
                <RailTab key={label} $active={active}>
                  <RailShape width="16" height="82" aria-hidden="true">
                    <path
                      d="M16 .5H3L.5 3v67L16 80.500z"
                      fill={active ? "#d8ecf8" : "#3a84ac"}
                      stroke={active ? "#e8f6ff" : "#14587c"}
                    />
                  </RailShape>
                  <RailLabel>{label}</RailLabel>
                  {i === 0 && (
                    <RailArrow width="6" height="8" aria-hidden="true">
                      <path d="M1 0 5 4 1 8z" fill="#e0f4ff" />
                    </RailArrow>
                  )}
                </RailTab>
              );
            })}
          </Rail>

          <ChartPanel>
            <ChartHeader>
              <ChartTitle>
                <TitleHan>标普</TitleHan> 500(SPCI)&lt;<TitleHan>日线</TitleHan>&gt;
              </ChartTitle>
              <HeaderLink href="#overlay">商品叠加</HeaderLink>
              <HeaderLink href="#period">周期</HeaderLink>
              <HeaderIcons>
                <IconButton aria-label="向左">
                  <svg width="16" height="14" fill="none" stroke="currentColor"><path d="M.5.500h15v13H.5z" /><path d="m2.500 7 4-4v2.500H13v3H6.500V11z" /></svg>
                </IconButton>
                <IconButton aria-label="向右">
                  <svg width="16" height="14" fill="none" stroke="currentColor"><path d="M.5.500h15v13H.5z" /><path d="m13.500 7-4-4v2.500H3v3h6.500V11z" /></svg>
                </IconButton>
                <IconButton aria-label="分栏">
                  <svg width="16" height="14" fill="none" stroke="currentColor"><path d="M.5.500h15v13H.5zM10.500.500v13M1 8.500h9" /><path d="M12 3.500h2M12 5.500h2M12 7.500h2M12 9.500h2" /></svg>
                </IconButton>
              </HeaderIcons>
            </ChartHeader>
            <PricePane />
            <VolumePane />
            <OscillatorPane />
            <DateAxis role="img" aria-label="日期">
              <line x1="61.5" x2="61.5" y1="0" y2="15" stroke={RED} />
              <text x="57" y="12" textAnchor="end" fontSize="12" fill="#e8e8e8">日线</text>
              {dates.map(([x, label]) => (
                <text key={label} x={x} y="11" fill="#e8e8e8">{label}</text>
              ))}
            </DateAxis>
          </ChartPanel>

          <QuotePanel>
            <QuoteHeader>
              <QuoteTitle>标普 <QuoteLatin>500(SPCI)</QuoteLatin></QuoteTitle>
              <QuoteCorner>
                <IconButton aria-label="还原">
                  <svg width="16" height="14" fill="none" stroke="currentColor"><path d="M.5.500h15v13H.5zM3.500 3.500h9v7h-9zM3 4.500h10" /></svg>
                </IconButton>
              </QuoteCorner>
            </QuoteHeader>
            {["卖出", "买入"].map((label) => (
              <BookRow key={label}>
                <BookLabel>{label}</BookLabel>
                <BookValue>---</BookValue>
                <BookValue>---</BookValue>
              </BookRow>
            ))}
            <QuoteTable>
              <tbody>
                {quotes.map(([l1, v1, l2, v2, color]) => (
                  <tr key={l1}>
                    <QuoteLabel scope="row">{l1}</QuoteLabel>
                    <QuoteValue $color={GREEN}>{v1}</QuoteValue>
                    <QuoteLabel scope="row" $second>{l2}</QuoteLabel>
                    <QuoteValue $color={color} $last>{v2}</QuoteValue>
                  </tr>
                ))}
              </tbody>
            </QuoteTable>
            <TickTable>
              <thead>
                <tr>
                  <TickHead scope="col">北京</TickHead>
                  <TickHead scope="col" $right>价格</TickHead>
                </tr>
              </thead>
              <tbody>
                {ticks.map(([time, price], i) => (
                  <tr key={i}>
                    <TickTime $minute={!time.startsWith(":")}>{time}</TickTime>
                    <TickPrice>{price}</TickPrice>
                  </tr>
                ))}
              </tbody>
            </TickTable>
            <PanelTabs>
              <PanelTab>笔</PanelTab>
            </PanelTabs>
          </QuotePanel>
        </Workspace>

        <StatusBar>
          {indices.map(([name, value, change, amount]) => (
            <IndexGroup key={name}>
              <IndexCell>{name}</IndexCell>
              <IndexCell $color={CYAN}>{value}</IndexCell>
              <IndexCell $color={CYAN}>{change}</IndexCell>
              <IndexCell $color="#ffff00">{amount}</IndexCell>
            </IndexGroup>
          ))}
          <Brand>Pob<BrandDot>o</BrandDot></Brand>
          <Signal width="22" height="14" viewBox="0 0 22 14" aria-hidden="true">
            <path d="M1 1.500h9L6 6v6M1 1.500 6 6.500" fill="none" stroke="#e8f0f4" strokeWidth="1.500" />
            <path d="M10 10h2v3h-2zM13 8h2v5h-2zM16 5h2v8h-2zM19 1h2v12h-2z" fill="#e8f0f4" />
          </Signal>
          <Clock>09:46</Clock>
        </StatusBar>
      </Frame>
    </>
  );
}
